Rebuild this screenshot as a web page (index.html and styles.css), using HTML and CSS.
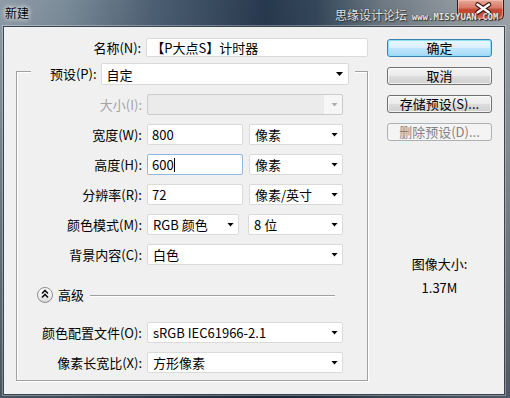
FILE: index.html
```html
<!DOCTYPE html>
<html lang="zh-CN">
<head>
    <meta charset="UTF-8">
    <title>新建</title>
    <link rel="stylesheet" href="styles.css">
</head>
<body>
    <div class="window">
        <div class="titlebar">
            <span class="title">新建</span>
            <div class="close-btn">
                <svg width="47" height="19" viewBox="0 0 47 19">
                    <path d="M19.5 4.5 L31 12.5 M31 4.5 L19.5 12.5" stroke="#3a1410" stroke-width="4.6" stroke-linecap="round"/>
                    <path d="M19.5 4.5 L31 12.5 M31 4.5 L19.5 12.5" stroke="#ffffff" stroke-width="2.4" stroke-linecap="round"/>
                </svg>
            </div>
            <span class="watermark">思缘设计论坛 <span class="site">www.MISSYUAN.COM</span></span>
        </div>

        <div class="client">
            <div class="main">
                <div class="row name-row">
                    <span class="label">名称(N):</span>
                    <div class="field w-name">【P大点S】计时器</div>
                </div>

                <div class="group">
                    <div class="legend">
                        <span class="label">预设(P):</span>
                        <div class="field select w-preset">自定<i class="arrow"></i></div>
                    </div>

                    <div class="row disabled">
                        <span class="label">大小(I):</span>
                        <div class="field select w-full"><i class="arrow"></i></div>
                    </div>
                    <div class="row">
                        <span class="label">宽度(W):</span>
                        <div class="field w-num">800</div>
                        <div class="field select w-unit">像素<i class="arrow"></i></div>
                    </div>
                    <div class="row">
                        <span class="label">高度(H):</span>
                        <div class="field w-num focused">600<span class="caret"></span></div>
                        <div class="field select w-unit">像素<i class="arrow"></i></div>
                    </div>
                    <div class="row">
                        <span class="label">分辨率(R):</span>
                        <div class="field w-num">72</div>
                        <div class="field select w-unit">像素/英寸<i class="arrow"></i></div>
                    </div>
                    <div class="row">
                        <span class="label">颜色模式(M):</span>
                        <div class="field select w-mode">RGB 颜色<i class="arrow"></i></div>
                        <div class="field select w-bits">8 位<i class="arrow"></i></div>
                    </div>
                    <div class="row">
                        <span class="label">背景内容(C):</span>
                        <div class="field select w-full">白色<i class="arrow"></i></div>
                    </div>

                    <div class="advanced">
                        <span class="toggle">
                            <svg width="16" height="16" viewBox="0 0 16 16">
                                <path d="M5 6.5 L8 3.5 L11 6.5 M5 10.5 L8 7.5 L11 10.5" fill="none" stroke="#111" stroke-width="1.6"/>
                            </svg>
                        </span>
                        <span class="advanced-text">高级</span>
                        <span class="rule"></span>
                    </div>

                    <div class="row profile-row">
                        <span class="label">颜色配置文件(O):</span>
                        <div class="field select w-full">sRGB IEC61966-2.1<i class="arrow"></i></div>
                    </div>
                    <div class="row">
                        <span class="label">像素长宽比(X):</span>
                        <div class="field select w-full">方形像素<i class="arrow"></i></div>
                    </div>
                </div>
            </div>

            <div class="side">
                <div class="btn default">确定</div>
                <div class="btn">取消</div>
                <div class="btn">存储预设(S)...</div>
                <div class="btn disabled">删除预设(D)...</div>

                <div class="image-size">
                    <div class="size-title">图像大小:</div>
                    <div class="size-value">1.37M</div>
                </div>
            </div>
        </div>
    </div>
</body>
</html>
```

FILE: styles.css
```css
body {
    margin: 0;
    font-family: "Noto Sans CJK SC", "Noto Sans", sans-serif;
    font-size: 13px;
    color: #000;
}

.window {
    position: relative;
    width: 510px;
    height: 398px;
    box-sizing: border-box;
    padding: 0 5px 3px 3px;
    display: flex;
    flex-direction: column;
    background:
        linear-gradient(180deg, rgba(0, 0, 0, 0) 0, rgba(15, 25, 38, 0.55) 100%),
        linear-gradient(90deg, #8e9ca7 0%, #7d8d9a 12%, #4d6073 30%, #27394e 52%, #34475a 62%, #6d7882 75%, #8c959c 88%, #9ea6ac 100%);
}

.titlebar {
    height: 26px;
    display: flex;
    align-items: flex-start;
}

.title {
    margin: 5px 0 0 2px;
    line-height: 16px;
    font-size: 12px;
    text-shadow: 0 0 4px #fff, 0 0 6px rgba(255, 255, 255, 0.8);
}

.close-btn {
    margin-left: auto;
    margin-right: 1px;
    width: 47px;
    height: 20px;
    box-sizing: border-box;
    border: 1px solid #3e1a16;
    border-top: none;
    border-radius: 0 0 5px 5px;
    background: linear-gradient(180deg, #e8a899 0%, #d9796a 40%, #c4442f 52%, #c9523b 80%, #e08b6a 100%);
    box-shadow: inset 0 0 0 1px rgba(255, 210, 200, 0.45);
}

.close-btn svg {
    display: block;
}

.watermark {
    position: absolute;
    left: 335px;
    top: 7px;
    font-size: 12px;
    line-height: 16px;
    color: #e4e4e4;
    text-shadow: 0 0 1px #222, 1px 1px 1px #333;
    white-space: nowrap;
}

.watermark .site {
    font-family: "DejaVu Sans Mono", monospace;
    font-size: 9px;
    font-weight: bold;
    margin-left: 2px;
}

.client {
    flex: 1;
    display: flex;
    background: #f0f0f0;
    border: 1px solid #3a4551;
    box-shadow: 0 0 0 1px rgba(255, 255, 255, 0.3);
}

.main {
    width: 364px;
    box-sizing: border-box;
    padding: 11px 0 0 12px;
}

.row {
    display: flex;
    align-items: center;
    height: 21px;
    margin-top: 9px;
}

.label {
    width: 125px;
    margin-right: 5px;
    text-align: right;
    white-space: nowrap;
    line-height: 16px;
}

.name-row {
    height: 19px;
    margin-top: 0;
}

.name-row .label {
    width: 126px;
}

.field {
    height: 21px;
    box-sizing: border-box;
    border: 1px solid #dadada;
    border-radius: 2px;
    background: #fff;
    padding: 0 4px;
    line-height: 19px;
    white-space: nowrap;
    display: flex;
    align-items: center;
}

.select {
    padding: 0 4px 0 5px;
}

.arrow {
    margin-left: auto;
    width: 7px;
    height: 4px;
    background: #000;
    clip-path: polygon(0 0, 100% 0, 50% 100%);
}

.focused {
    border-color: #8fb8e0;
}

.caret {
    width: 1px;
    height: 14px;
    background: #000;
}

.w-name { width: 223px; height: 19px; }
.w-preset { width: 250px; height: 22px; padding-right: 5px; }
.w-full { width: 196px; }
.w-num { width: 96px; margin-right: 6px; }
.w-unit { width: 94px; }
.w-mode { width: 92px; margin-right: 9px; }
.w-bits { width: 95px; }

.disabled .label {
    color: #a3a3a3;
}

.disabled .field {
    border-color: #cbcbcb;
    background: linear-gradient(90deg, #ebebeb calc(100% - 18px), #f6f6f6 calc(100% - 18px));
}

.disabled .arrow {
    background: #adadad;
}

.group {
    width: 352px;
    box-sizing: border-box;
    margin-top: 14px;
    border: 1px solid #a0a0a0;
    box-shadow: 1px 1px 0 #fff, inset 1px 1px 0 #fff;
    padding-bottom: 7px;
}

.legend {
    display: flex;
    align-items: center;
    margin: -9px 0 0 14px;
    width: 324px;
    box-sizing: border-box;
    padding: 0 6px 0 2px;
    background: #f0f0f0;
}

.legend .label {
    width: 64px;
    margin-right: 4px;
}

.advanced {
    display: flex;
    align-items: center;
    height: 16px;
    margin: 22px 0 0 20px;
}

.toggle {
    width: 16px;
    height: 16px;
    box-sizing: border-box;
    border: 1px solid #8d8d8d;
    border-radius: 50%;
    background: linear-gradient(180deg, #ffffff 0%, #f4f4f4 50%, #d8d8d8 100%);
}

.toggle svg {
    display: block;
    margin: -1px 0 0 -1px;
}

.advanced-text {
    margin-left: 5px;
    line-height: 16px;
}

.rule {
    flex: 1;
    margin: 1px 32px 0 6px;
    border-top: 1px solid #a0a0a0;
    border-bottom: 1px solid #fff;
}

.profile-row {
    margin-top: 19px;
}

.side {
    width: 105px;
    margin-left: 19px;
    padding-top: 12px;
}

.btn {
    height: 18px;
    box-sizing: border-box;
    margin-bottom: 10px;
    border: 1px solid #707070;
    border-radius: 3px;
    background: linear-gradient(180deg, #f3f3f3 0%, #ebebeb 48%, #dddddd 52%, #cfcfcf 100%);
    box-shadow: inset 0 0 0 1px rgba(255, 255, 255, 0.75);
    text-align: center;
    line-height: 16px;
    white-space: nowrap;
}

.btn.default {
    border-color: #3c7fb1;
    background: linear-gradient(180deg, #eaf6fd 0%, #d9f0fc 48%, #bee6fd 52%, #a7d9f5 100%);
    box-shadow: inset 0 0 0 1px #8fe0fb;
}

.btn.disabled {
    border-color: #adb2b5;
    background: #f4f4f4;
    box-shadow: none;
    color: #838383;
}

.image-size {
    margin-top: 115px;
    text-align: center;
}

.size-title {
    line-height: 16px;
}

.size-value {
    margin-top: 8px;
    line-height: 16px;
}
```
